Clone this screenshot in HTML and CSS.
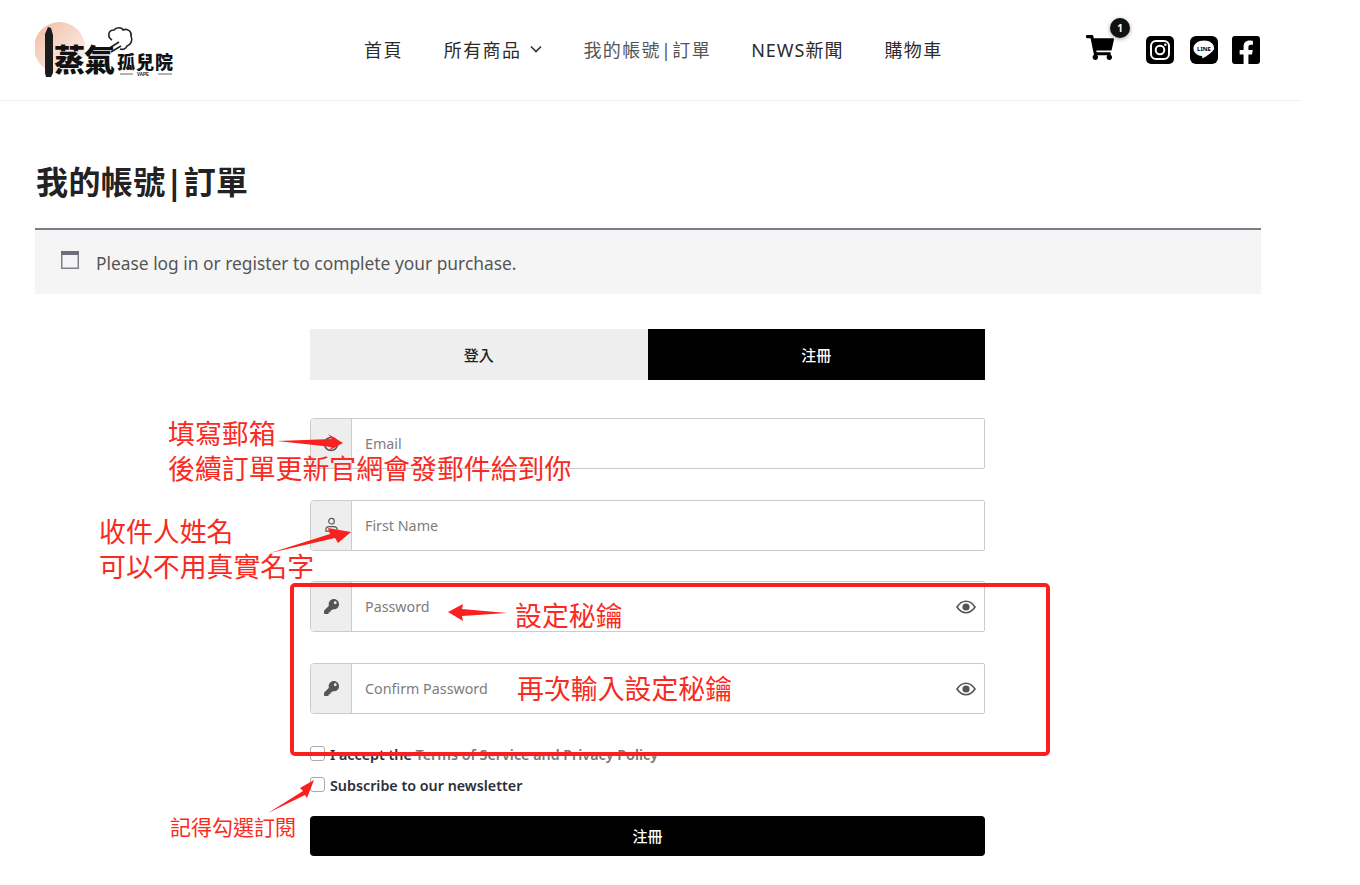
FILE: index.html
```html
<!DOCTYPE html>
<html>
    <head lang="zh-Hant">
        <meta name="viewport" content="width=device-width, initial-scale=1" />
        <title>我的帳號 | 訂單</title>
        <link rel="stylesheet" href="styles.css">
    </head>
    <body>
        <div class="page">
            <header class="site-header">
                <a class="logo" href="#">
                    <svg class="logo-art" viewBox="0 0 140 70" width="140" height="70">
                        <defs>
                            <linearGradient id="sun" x1="0" y1="0" x2="1" y2="1">
                                <stop offset="0" stop-color="#f0bda6" />
                                <stop offset="1" stop-color="#fdf5ef" />
                            </linearGradient>
                        </defs>
                        <circle cx="24.500" cy="29.500" r="25.500" fill="url(#sun)" />
                        <path d="M10 16l3-7 3 1 2 7v38l-2 4h-5l-1-4z" fill="#1c1c1c" />
                        <path d="M73 31l11-7M76 34l10-6" stroke="#222" stroke-width="1.600" fill="none" />
                        <path d="M77 22c-5-3-4-10 2-10 2-3 8-3 9 0 5-2 9 2 8 6 2 4 0 9-4 10-1 3-4 4-7 3" stroke="#222" stroke-width="1.600" fill="none" />
                        <path d="M85 56h13M123 56h14" stroke="#666" stroke-width="1" />
                    </svg>
                    <span class="logo-big">蒸氣</span>
                    <span class="logo-small">孤兒院</span>
                    <span class="logo-tiny">VAPE</span>
                </a>
                <nav class="main-nav">
                    <a href="#">首頁</a>
                    <a href="#">所有商品
                        <svg class="chevron" viewBox="0 0 12 8" width="12" height="8"><path d="M1 1.500l5 5 5-5" /></svg>
                    </a>
                    <a class="current" href="#">我的帳號|訂單</a>
                    <a class="news" href="#">NEWS新聞</a>
                    <a href="#">購物車</a>
                </nav>
                <div class="header-icons">
                    <a class="cart" href="#">
                        <svg viewBox="0 0 576 512" width="28" height="25"><path d="M528.12 301.319l47.273-208C578.806 78.301 567.391 64 551.99 64H159.208l-9.166-44.81C147.758 8.021 137.93 0 126.529 0H24C10.745 0 0 10.745 0 24v16c0 13.255 10.745 24 24 24h69.883l70.248 343.435C147.325 417.1 136 435.222 136 456c0 30.928 25.072 56 56 56s56-25.072 56-56c0-15.674-6.447-29.835-16.824-40h209.647C430.447 426.165 424 440.326 424 456c0 30.928 25.072 56 56 56s56-25.072 56-56c0-22.172-12.888-41.332-31.579-50.405l5.517-24.276c3.413-15.018-8.002-29.319-23.403-29.319H218.117l-6.545-32h293.145c11.206 0 20.92-7.754 23.403-18.681z" /></svg>
                        <span class="cart-count">1</span>
                    </a>
                    <a class="social" href="#">
                        <svg viewBox="0 0 28 28" width="28" height="28">
                            <rect width="28" height="28" rx="5" fill="#000" />
                            <rect x="5" y="5" width="18" height="18" rx="5" fill="none" stroke="#fff" stroke-width="2" />
                            <circle cx="14" cy="14" r="4.300" fill="none" stroke="#fff" stroke-width="2" />
                            <circle cx="19.300" cy="8.700" r="1.200" fill="#fff" />
                        </svg>
                    </a>
                    <a class="social" href="#">
                        <svg viewBox="0 0 28 28" width="28" height="28">
                            <rect width="28" height="28" rx="6" fill="#000" />
                            <path d="M14 4.500c-5.800 0-10.500 3.500-10.500 7.900 0 3.900 3.400 7 8.200 7.700.6.100.6.700.5 1.300-.1.600.2 1 .9.600 1.800-1 6.300-3.600 8.600-6.100 1.500-1.600 2.300-2.300 2.300-3.500C24.500 8 19.800 4.500 14 4.500z" fill="#fff" />
                            <text class="line-word" x="14" y="14.500">LINE</text>
                        </svg>
                    </a>
                    <a class="social" href="#">
                        <svg viewBox="0 0 448 448" width="28" height="28"><path transform="translate(0 -32)" d="M400 32H48A48 48 0 0 0 0 80v352a48 48 0 0 0 48 48h137.25V327.69h-63V256h63v-54.64c0-62.15 37-96.48 93.67-96.48 27.14 0 55.52 4.84 55.52 4.84v61h-31.27c-30.81 0-40.42 19.12-40.42 38.73V256h68.78l-11 71.69h-57.78V480H400a48 48 0 0 0 48-48V80a48 48 0 0 0-48-48z" /></svg>
                    </a>
                </div>
            </header>

            <main class="content">
                <h1 class="page-title">我的帳號|訂單</h1>

                <div class="notice">
                    <svg class="notice-icon" viewBox="0 0 18 18" width="18" height="18">
                        <rect x=".75" y=".75" width="16.500" height="16.500" fill="none" stroke="#7c8088" stroke-width="1.500" />
                        <rect x="0" y="0" width="18" height="4" fill="#6d6f78" />
                    </svg>
                    <p>Please log in or register to complete your purchase.</p>
                </div>

                <form class="register-form">
                    <div class="tabs">
                        <a class="tab" href="#">登入</a>
                        <a class="tab active" href="#">注冊</a>
                    </div>

                    <div class="field">
                        <span class="field-icon">
                            <svg viewBox="0 0 16 16" width="16" height="16"><circle cx="8" cy="8" r="6.500" fill="none" stroke="#555" stroke-width="1.500" /><circle cx="8" cy="8" r="2.500" fill="none" stroke="#555" stroke-width="1.500" /></svg>
                        </span>
                        <input type="text" placeholder="Email">
                    </div>
                    <div class="field">
                        <span class="field-icon user-icon">
                            <svg viewBox="0 0 16 16" width="15" height="15"><circle cx="8" cy="4.500" r="3" fill="none" stroke="#555" stroke-width="1.200" /><path d="M2 15v-1.500c0-2 1.500-3.300 3.500-3.300h5c2 0 3.500 1.300 3.500 3.300V15z" fill="none" stroke="#555" stroke-width="1.200" /></svg>
                        </span>
                        <input type="text" placeholder="First Name">
                    </div>
                    <div class="field">
                        <span class="field-icon">
                            <svg viewBox="0 0 512 512" width="15" height="15"><path fill="#555" d="M512 176.001C512 273.203 433.202 352 336 352c-11.22 0-22.19-1.062-32.827-3.069l-24.012 27.014A23.999 23.999 0 0 1 261.223 384H224v40c0 13.255-10.745 24-24 24h-40v40c0 13.255-10.745 24-24 24H24c-13.255 0-24-10.745-24-24v-78.059c0-6.365 2.529-12.47 7.029-16.971l161.802-161.802C163.108 213.814 160 195.271 160 176 160 78.798 238.797.001 335.999 0 433.488-.001 512 78.511 512 176.001zM336 128c0 26.51 21.49 48 48 48s48-21.49 48-48-21.49-48-48-48-48 21.49-48 48z" /></svg>
                        </span>
                        <input type="password" placeholder="Password">
                        <svg class="eye" viewBox="0 0 20 14" width="20" height="14"><path d="M1 7c2.500-3.800 5.500-5.700 9-5.700S16.500 3.200 19 7c-2.500 3.800-5.500 5.700-9 5.700S3.500 10.800 1 7z" fill="none" stroke="#555" stroke-width="1.600" /><circle cx="10" cy="7" r="3.600" fill="#555" /></svg>
                    </div>
                    <div class="field">
                        <span class="field-icon">
                            <svg viewBox="0 0 512 512" width="15" height="15"><path fill="#555" d="M512 176.001C512 273.203 433.202 352 336 352c-11.22 0-22.19-1.062-32.827-3.069l-24.012 27.014A23.999 23.999 0 0 1 261.223 384H224v40c0 13.255-10.745 24-24 24h-40v40c0 13.255-10.745 24-24 24H24c-13.255 0-24-10.745-24-24v-78.059c0-6.365 2.529-12.47 7.029-16.971l161.802-161.802C163.108 213.814 160 195.271 160 176 160 78.798 238.797.001 335.999 0 433.488-.001 512 78.511 512 176.001zM336 128c0 26.51 21.49 48 48 48s48-21.49 48-48-21.49-48-48-48-48 21.49-48 48z" /></svg>
                        </span>
                        <input type="password" placeholder="Confirm Password">
                        <svg class="eye" viewBox="0 0 20 14" width="20" height="14"><path d="M1 7c2.500-3.800 5.500-5.700 9-5.700S16.500 3.200 19 7c-2.500 3.800-5.500 5.700-9 5.700S3.500 10.800 1 7z" fill="none" stroke="#555" stroke-width="1.600" /><circle cx="10" cy="7" r="3.600" fill="#555" /></svg>
                    </div>

                    <label class="check-row first-check">
                        <span class="check-box"></span>
                        <span>I accept the <span class="terms">Terms of Service and Privacy Policy</span></span>
                    </label>
                    <label class="check-row">
                        <span class="check-box"></span>
                        <span>Subscribe to our newsletter</span>
                    </label>

                    <button class="submit-button" type="button">注冊</button>
                </form>
            </main>
        </div>

        <!-- red notes drawn on top of the screenshot -->
        <div class="red-box"></div>
        <svg class="arrows" viewBox="0 0 1360 885" width="1360" height="885">
            <polygon points="277,441 332,439 328,434 343,443 328,451 332,447" />
            <polygon points="270,553 330,534 328,528 351,532 338,543 335,538" />
            <polygon points="507,613 462,609 463,604 448,612 463,621 462,616" />
            <polygon points="268,813 303,791 300,788 314,780 307,798 305,795" />
        </svg>
        <p class="note note-email">填寫郵箱<br>後續訂單更新官網會發郵件給到你</p>
        <p class="note note-name">收件人姓名<br>可以不用真實名字</p>
        <p class="note note-pass">設定秘鑰</p>
        <p class="note note-confirm">再次輸入設定秘鑰</p>
        <p class="note note-sub">記得勾選訂閱</p>
    </body>
</html>
```

FILE: styles.css
```css
* {
    box-sizing: border-box;
}

body {
    margin: 0;
    background-color: #fff;
    color: #222;
    font-family: "Noto Sans", "Noto Sans CJK TC", sans-serif;
    overflow: hidden;
}

a {
    color: inherit;
    text-decoration: none;
}

.page {
    width: 1300px;
}

.site-header {
    display: flex;
    align-items: center;
    height: 101px;
    padding: 0 40px 0 35px;
    border-bottom: 1px solid #eee;
}

/* logo */
.logo {
    position: relative;
    display: block;
    flex: none;
    width: 140px;
    height: 70px;
    margin-top: 6px;
    color: #111;
}

.logo-art {
    display: block;
}

.logo-big {
    position: absolute;
    left: 19px;
    top: 27px;
    font-family: "Noto Sans CJK TC", sans-serif;
    font-size: 31px;
    font-weight: 900;
    line-height: 25px;
    letter-spacing: -1px;
}

.logo-small {
    position: absolute;
    left: 82px;
    top: 36px;
    font-family: "Liberation Sans", "Noto Sans CJK TC", sans-serif;
    font-size: 18px;
    font-weight: 900;
    line-height: 18px;
    letter-spacing: 1px;
}

.logo-tiny {
    position: absolute;
    left: 102px;
    top: 54px;
    font-family: "Liberation Sans", sans-serif;
    font-size: 4.500px;
    font-weight: 700;
    line-height: 6px;
}

/* nav */
.main-nav {
    display: flex;
    align-items: center;
    gap: 41px;
    margin: 0 0 2px 189px;
    font-size: 18px;
    letter-spacing: 1.400px;
    white-space: nowrap;
}

.main-nav a {
    display: flex;
    align-items: center;
    gap: 9px;
    color: #2b2b2b;
}

.main-nav a.current {
    color: #555;
}

.main-nav a.news {
    letter-spacing: 1px;
    margin-left: -1px;
}

.chevron path {
    fill: none;
    stroke: #333;
    stroke-width: 1.600;
}

/* cart and social */
.header-icons {
    display: flex;
    align-items: center;
    margin-left: auto;
}

.cart {
    position: relative;
    display: block;
    width: 28px;
    height: 25px;
    margin: 0 32px 6px 0;
}

.cart svg,
.social svg {
    display: block;
}

.cart-count {
    position: absolute;
    top: -17px;
    left: 24px;
    width: 20px;
    height: 20px;
    border-radius: 50%;
    background-color: #111;
    box-shadow: 0 1px 4px rgba(0,0,0,0.4);
    color: #fff;
    font-size: 10px;
    font-weight: 700;
    line-height: 20px;
    text-align: center;
}

.social {
    display: block;
    margin-left: 16px;
}

.cart + .social {
    margin-left: 0;
}

.social:last-child {
    margin-left: 14px;
}

.line-word {
    fill: #000;
    font-size: 6px;
    font-weight: 700;
    text-anchor: middle;
}

/* content */
.content {
    padding: 0 39px 0 35px;
}

.page-title {
    margin: 58px 0 23px 1px;
    color: #222;
    font-size: 32px;
    font-weight: 700;
    line-height: 46px;
    letter-spacing: .4px;
}

.notice {
    display: flex;
    align-items: flex-start;
    height: 66px;
    padding: 21px 26px 0;
    border-top: 2px solid #7e7a8a;
    background-color: #f5f5f5;
    color: #555;
}

.notice-icon {
    flex: none;
    margin-right: 17px;
}

.notice p {
    margin: 0;
    font-size: 17.380px;
    line-height: 25px;
}

.register-form {
    width: 675px;
    margin: 35px 0 0 275px;
}

.tabs {
    display: flex;
    height: 51px;
    margin-bottom: 38px;
}

.tab {
    flex: 1;
    display: flex;
    align-items: center;
    justify-content: center;
    background-color: #eee;
    color: #222;
    font-size: 15px;
    font-weight: 500;
}

.tab.active {
    background-color: #000;
    color: #fff;
}

.field {
    position: relative;
    display: flex;
    height: 51px;
    margin-bottom: 30.670px;
    border: 1px solid #ccc;
    border-radius: 4px 2px 2px 4px;
    background-color: #fff;
}

.field-icon {
    flex: none;
    display: flex;
    align-items: center;
    justify-content: center;
    width: 41px;
    border-right: 1px solid #ccc;
    border-radius: 3px 0 0 3px;
    background-color: #eee;
}

.user-icon svg {
    margin-bottom: 2px;
}

.field input {
    flex: 1;
    border: 0;
    outline: 0;
    padding: 0 13px;
    background: transparent;
    font-family: inherit;
    font-size: 14.300px;
}

.field input::placeholder {
    color: #7d7d7d;
    opacity: 1;
}

.eye {
    position: absolute;
    right: 8px;
    top: 18px;
}

.check-row {
    display: flex;
    align-items: center;
    gap: 5px;
    height: 20px;
    color: #2c2f3a;
    font-size: 14.300px;
    font-weight: 600;
    margin-bottom: 11px;
}

.first-check {
    margin-top: 4px;
}

.check-box {
    flex: none;
    width: 15px;
    height: 15px;
    margin-top: -3px;
    border: 1px solid #aaa;
    border-radius: 3px;
    background-color: #fff;
}

.terms {
    color: #777;
}

.submit-button {
    display: block;
    width: 100%;
    height: 40px;
    margin-top: 20px;
    border: 0;
    border-radius: 4px;
    background-color: #000;
    color: #fff;
    font-family: inherit;
    font-size: 15px;
    font-weight: 500;
}

/* red notes */
.red-box {
    position: absolute;
    left: 290px;
    top: 583px;
    width: 760px;
    height: 173px;
    border: 4px solid #fb2020;
    border-radius: 5px;
}

.arrows {
    position: absolute;
    left: 0;
    top: 0;
    fill: #fb2020;
    pointer-events: none;
}

.note {
    position: absolute;
    margin: 0;
    color: #f92a22;
    font-family: "Liberation Sans", "Noto Sans CJK TC", sans-serif;
    font-size: 26.900px;
    line-height: 35px;
    white-space: nowrap;
}

.note-email {
    left: 168px;
    top: 418px;
}

.note-name {
    left: 99px;
    top: 516px;
}

.note-pass {
    left: 515px;
    top: 600px;
}

.note-confirm {
    left: 517px;
    top: 673px;
}

.note-sub {
    left: 170px;
    top: 813px;
    font-size: 21px;
    line-height: 30px;
}
```
